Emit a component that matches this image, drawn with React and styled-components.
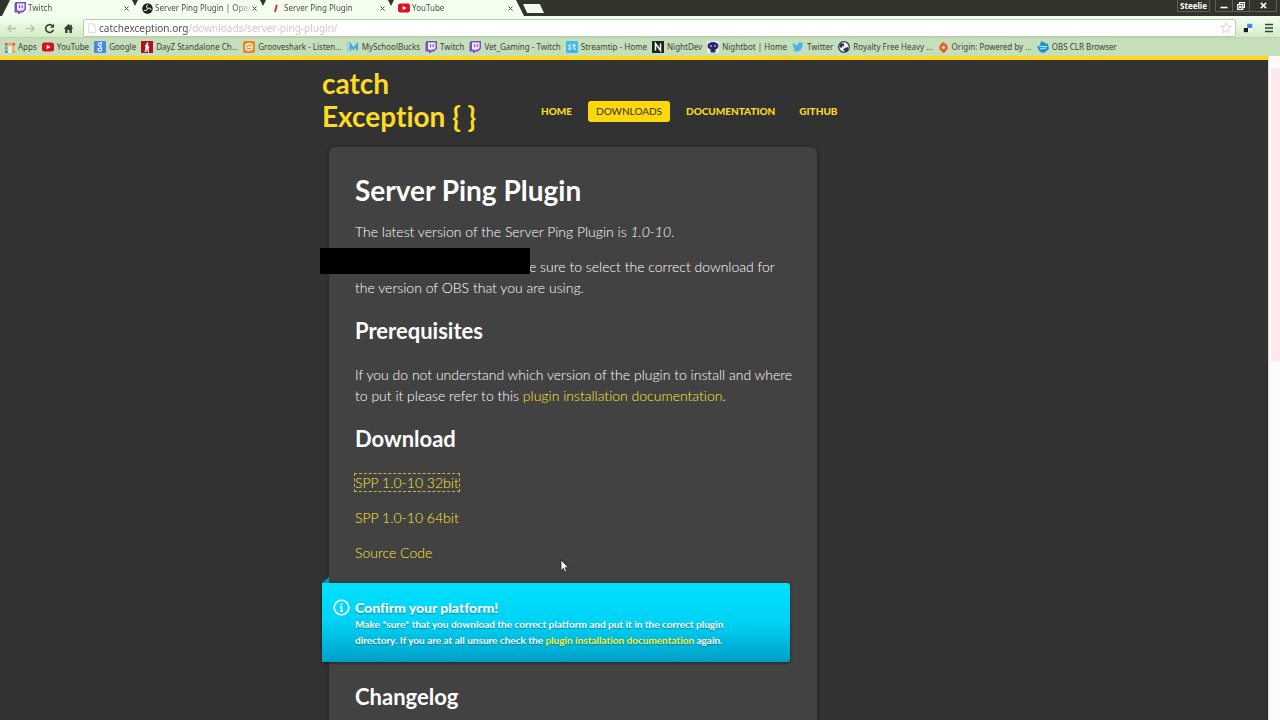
import React from "react";
import styled, { createGlobalStyle } from "styled-components";

const Global = createGlobalStyle`
  * { box-sizing: border-box; }
  html, body { margin: 0; padding: 0; background: #323232; overflow: hidden; }
  button { border: 0; padding: 0; background: none; font: inherit; color: inherit; }
  a { color: inherit; text-decoration: none; }
  h1, h2, h3, p { margin: 0; }
`;

const ui = `"Noto Sans", "Open Sans", sans-serif`;

const Shell = styled.div`
  display: flex;
  flex-direction: column;
  height: 100vh;
  font-family: ${ui};
`;

const TabStrip = styled.header`
  display: flex;
  height: 16px;
  padding-left: 2px;
  background: #31342b;
`;

const Tab = styled.div`
  display: flex;
  align-items: center;
  flex: 0 0 138px;
  min-width: 0;
  height: 16px;
  padding: 0 11px 0 12px;
  background: #f4fff0;
  clip-path: polygon(8px 0, 130px 0, 100% 100%, 0 100%);
  color: #4a5046;
  font-size: 8px;
  line-height: 16px;
  & + & { margin-left: -10px; }
`;

const TabTitle = styled.span`
  flex: 1;
  min-width: 0;
  margin-left: 2px;
  overflow: hidden;
  white-space: nowrap;
  mask-image: linear-gradient(to right, #000 78px, transparent 100px);
`;

const TabClose = styled.button`
  display: flex;
  margin-left: 2px;
`;

const NewTab = styled.button`
  width: 21px;
  height: 9px;
  margin: 4px 0 0 -1px;
  background: #f1faec;
  clip-path: polygon(0 0, 80% 0, 100% 100%, 20% 100%);
`;

const WindowBar = styled.div`
  display: flex;
  gap: 5px;
  height: 12px;
  margin: 0 3px 0 auto;
  color: #fff;
`;

const UserButton = styled.button`
  width: 33px;
  border: 1px solid #5c6056;
  border-top: 0;
  font-size: 8px;
  font-weight: 700;
  line-height: 11px;
`;

const WindowButtons = styled.div`
  display: flex;
  border: 1px solid #5c6056;
  border-top: 0;
`;

const WindowButton = styled.button`
  display: flex;
  align-items: center;
  justify-content: center;
  width: ${(p) => p.$w}px;
  & + & { border-left: 1px solid #5c6056; }
`;

const Toolbar = styled.div`
  display: flex;
  align-items: center;
  height: 21px;
  padding: 3px 1px 0 2px;
  background: linear-gradient(#f4fff0, #d3ecc9);
`;

const ToolButton = styled.button`
  display: flex;
  align-items: center;
  justify-content: center;
  width: ${(p) => p.$w || 19}px;
  height: 18px;
`;

const Omnibox = styled.div`
  display: flex;
  align-items: center;
  flex: 1;
  height: 18px;
  margin: 0 1px 0 5px;
  padding: 0 3px;
  background: #fff;
  border: 1px solid #b4cfa9;
  border-radius: 2px;
`;

const Address = styled.input`
  flex: 1;
  min-width: 0;
  height: 16px;
  margin-left: 2px;
  padding: 0;
  border: 0;
  outline: 0;
  font-family: ${ui};
  font-size: 10px;
  color: transparent;
  background: linear-gradient(to right, #4b4b4b 89px, #cdc3cd 89px);
  background-clip: text;
`;

const Bookmarks = styled.nav`
  display: flex;
  align-items: center;
  gap: 5px;
  height: 19px;
  padding-left: 4px;
  background: #c6dfbb;
  border-top: 1px solid #b9d3ae;
`;

const Bookmark = styled.a`
  display: flex;
  align-items: center;
  gap: 3px;
  flex: none;
  color: #38423a;
  font-size: 8px;
  line-height: 16px;
  white-space: nowrap;
`;

const Frame = styled.div`
  display: flex;
  flex: 1;
  min-height: 0;
`;

const Page = styled.div`
  flex: 1;
  min-width: 0;
  overflow: hidden;
  background: #323232;
  border-top: 4px solid #fbd51b;
  font-family: Lato, sans-serif;
  font-variant-ligatures: none;
`;

const Rail = styled.div`
  width: 12px;
  padding: 12px 0 0 2px;
  background: #fffafb;
  border-left: 1px solid #dcdcdc;
`;

const Thumb = styled.div`
  height: 45%;
  background: #fde8ec;
`;

const Container = styled.div`
  max-width: 640px;
  margin: 0 auto;
  padding: 7px 8px 0;
`;

const SiteHeader = styled.div`
  display: flex;
  align-items: flex-start;
`;

const Logo = styled.a`
  width: 211px;
  color: #fddb23;
  font-size: 28px;
  font-weight: 700;
  line-height: 33px;
`;

const Menu = styled.nav`
  display: flex;
  gap: 8px;
  margin-top: 34px;
`;

const MenuLink = styled.a`
  padding: 0 8px;
  border-radius: 3px;
  color: ${(p) => (p.$active ? "#32300f" : "#fddb23")};
  background: ${(p) => (p.$active ? "#fed80c" : "none")};
  font-size: 10px;
  font-weight: ${(p) => (p.$active ? 400 : 900)};
  line-height: 21px;
`;

const Card = styled.main`
  max-width: 488px;
  margin: 14px 0 0 7px;
  padding: 26px 23px 80px 26px;
  border-radius: 6px;
  background: #424242;
  box-shadow: 0 0 4px rgba(0, 0, 0, 0.35);
  color: #ffffff;
  font-size: 14px;
  font-weight: 300;
  line-height: 21px;
`;

const Title = styled.h1`
  color: #fff;
  font-size: 28px;
  font-weight: 700;
  line-height: 34px;
`;

const Heading = styled.h2`
  margin-top: 20px;
  color: #fff;
  font-size: 22px;
  font-weight: 700;
  line-height: 26px;
`;

const Para = styled.p`
  margin-top: ${(p) => p.$gap || 14}px;
`;

const RedactedPara = styled(Para)`
  position: relative;
  text-indent: 174px;
`;

const Redaction = styled.span`
  position: absolute;
  top: -8px;
  left: -35px;
  width: 210px;
  height: 26px;
  background: #000;
`;

const TextLink = styled.a`
  color: #ffe636;
`;

const DownloadLink = styled(TextLink)`
  outline: ${(p) => (p.$focused ? "1px dashed #c9b54a" : "none")};
`;

const Callout = styled.aside`
  position: relative;
  display: flex;
  gap: 5px;
  margin: 20px 4px 22px -33px;
  padding: 16px 40px 14px 11px;
  border-radius: 0 3px 3px 0;
  background: linear-gradient(#00e1ff, #00d2f6 50%, #009fc6);
  box-shadow: 0 1px 3px rgba(0, 0, 0, 0.5);
  color: #fff;
  font-size: 10px;
  font-weight: 700;
  line-height: 16px;
  text-shadow: 0 1px 1px rgba(0, 60, 80, 0.5);
  &::before {
    content: "";
    position: absolute;
    left: 0;
    top: -6px;
    border-left: 7px solid transparent;
    border-bottom: 6px solid #0093b5;
  }
`;

const CalloutTitle = styled.h3`
  font-size: 14px;
  font-weight: 900;
  line-height: 17px;
`;

const CalloutLink = styled.a`
  color: #fff23a;
`;

const Pointer = styled.svg`
  position: fixed;
  left: 560px;
  top: 559px;
`;

const Drawing = styled.svg`
  flex: none;
`;

const Svg = ({ s = 12, vb = 12, children }) => (
  <Drawing width={s} height={s} viewBox={`0 0 ${vb} ${vb}`} fill="none" aria-hidden="true">{children}</Drawing>
);

const icons = {
  apps: <Svg s={11}>{["#e2574c", "#f0a04b", "#e2574c", "#5bb56a", "#fff", "#e6c23f", "#4a90d9", "#fff", "#f0a04b"].map((c, i) => (
    <rect key={i} x={1 + (i % 3) * 4} y={1 + Math.floor(i / 3) * 4} width="3" height="3" fill={c} />))}</Svg>,
  youtube: <Svg><rect y="1.5" width="12" height="9" rx="2.2" fill="#dc1020" /><path d="M4.7 3.8v4.4L8.5 6z" fill="#fff" /></Svg>,
  google: <Svg><rect width="12" height="12" rx="1" fill="#4c86ea" /><path d="M8 1.8H6C3.6 1.8 3.5 5 5.8 5c1.900 0 2-3 .2-3.200M6 5c-.6 1 .9 1.200 1.400 2.100C8.300 9 7 10.300 5.500 10.300S3.200 8.400 4.600 7.600c.8-.4 1.400-.4 2-.4" stroke="#fff" strokeWidth="1.100" /></Svg>,
  dayz: <Svg><rect width="12" height="12" fill="#b01020" /><path d="M6 1l1.400 1-.4 2 1.500 3-1 .5.5 4H6.800L6.300 8 5 11H3.500l1-4L4 4.500 5.400 3z" fill="#fff" /></Svg>,
  groove: <Svg><rect width="12" height="12" rx="2" fill="#f58220" /><circle cx="6" cy="6" r="4" fill="#fff" /><path d="M3.500 6.500C4 4 7 3.500 8.500 5.500M4 7.500h4.500" stroke="#f58220" strokeWidth="1.300" /></Svg>,
  msb: <Svg><path d="M1 1v10" stroke="#7fc3ee" /><path d="M3.500 9.500v-6L6.500 8l3.500-4.500v6" stroke="#3f9fe0" strokeWidth="1.800" /></Svg>,
  twitch: <Svg><path d="M1.500 0H12v7.500L9 10.500H7L5.300 12H4v-1.500H.5V2z" fill="#7b4fc4" /><path d="M3 1.500h7.500v5.300L9 8.500H6.800L5.300 9.800V8.500H3z" fill="#f4efff" /><path d="M5.500 3.200v3M8.200 3.200v3" stroke="#7b4fc4" strokeWidth="1.200" /></Svg>,
  streamtip: <Svg><rect width="12" height="12" rx="1" fill="#41b8ee" /><path d="M5.500 3.800H3.800c-1.500 0-1.300 2 0 2.100s1.500 2.200 0 2.200H2M8 2.500v4.700c0 .9.800 1 2 .8M6.700 4.500H10" stroke="#e4f7ff" strokeWidth="1.100" /></Svg>,
  nightdev: <Svg><rect width="12" height="12" fill="#20221d" /><path d="M3.500 9.500v-7l5 7v-7" stroke="#fff" strokeWidth="1.500" /></Svg>,
  nightbot: <Svg><rect width="12" height="12" fill="#e9ecf4" /><ellipse cx="6" cy="5" rx="5.500" ry="4" fill="#2c2565" /><rect x="3.500" y="8" width="5" height="3.500" rx="1" fill="#2c2565" /><circle cx="4" cy="5" r="1" fill="#aab0e8" /><circle cx="8" cy="5" r="1" fill="#aab0e8" /></Svg>,
  twitter: <Svg><path d="M11.500 2.800l-1.100 1.100C10.400 8 7.500 10.500 4 10.500c-1.300 0-2.500-.3-3.500-1 1.300.1 2.400-.2 3.200-.9-1-.1-1.800-.7-2.100-1.600h1C1.500 6.600.8 5.700.8 4.600l1 .3C.8 4.100.6 2.900 1.200 1.800c1.200 1.400 2.800 2.300 4.800 2.400C5.600 2.400 6.700 1.300 8 1.300c.7 0 1.200.3 1.600.7l1.400-.5-.9 1.300z" fill="#4db3ee" /></Svg>,
  royalty: <Svg><circle cx="6" cy="6" r="5.300" fill="#eef1f7" stroke="#2b3158" strokeWidth="1.200" /><path d="M2 2.500h4v2.800H4V7L1.500 6zM7 7l3-1v3L7.500 10.500 5 9z" fill="#2b3158" /></Svg>,
  origin: <Svg s={11}><circle cx="6" cy="6" r="3.300" stroke="#f0562c" strokeWidth="2.800" /><path d="M7 0L4 2.500M5 12l3-2.500" stroke="#f0562c" strokeWidth="1.500" /></Svg>,
  clr: <Svg><path d="M4 0l7 3 1 5-5 4-4-1-3-5 3-2z" fill="#2194cf" /><path d="M2 5.500h8M3 8l6-1" stroke="#bfe7fb" strokeWidth="1.200" /></Svg>,
  obs: <Svg s={11}><circle cx="6" cy="6" r="5.700" fill="#1c1d19" /><path d="M6.500 1.800C4.500 3 4.500 5 6.300 5.700M9.800 8c0-2.200-1.900-3.200-3.400-2M2 7.800c2 1.200 3.900 0 3.800-1.800" stroke="#e6ebe0" strokeWidth="1.100" /></Svg>,
  slash: <Svg><path d="M6.800 2.800L5 10" stroke="#e02030" strokeWidth="1.800" /></Svg>,
};

const tabs = [
  ["twitch", "Twitch"],
  ["obs", "Server Ping Plugin | Open"],
  ["slash", "Server Ping Plugin"],
  ["youtube", "YouTube"],
];

const marks = [
  ["apps", "Apps"], ["youtube", "YouTube"], ["google", "Google"], ["dayz", "DayZ Standalone Ch..."],
  ["groove", "Grooveshark - Listen..."], ["msb", "MySchoolBucks"], ["twitch", "Twitch"],
  ["twitch", "Vet_Gaming - Twitch"], ["streamtip", "Streamtip - Home"], ["nightdev", "NightDev"],
  ["nightbot", "Nightbot | Home"], ["twitter", "Twitter"], ["royalty", "Royalty Free Heavy ..."],
  ["origin", "Origin: Powered by ..."], ["clr", "OBS CLR Browser"],
];

export default function App() {
  return (
    <Shell>
      <Global />
      <TabStrip>
        {tabs.map(([icon, title]) => (
          <Tab key={title}>
            {icons[icon]}
            <TabTitle>{title}</TabTitle>
            <TabClose aria-label={`Close ${title}`}>
              <Svg s={5} vb={5}><path d="M.5.5l4 4M4.500.5l-4 4" stroke="#4a5046" /></Svg>
            </TabClose>
          </Tab>
        ))}
        <NewTab aria-label="New tab" />
        <WindowBar>
          <UserButton>Steelie</UserButton>
          <WindowButtons>
            <WindowButton $w={16} aria-label="Minimize"><Svg s={8} vb={8}><path d="M.5 5.500h7" stroke="#fff" strokeWidth="1.600" /></Svg></WindowButton>
            <WindowButton $w={17} aria-label="Restore"><Svg s={8} vb={8}><path d="M2.500 2V.700h5v4.600H6M.7 2.700h5v4.600h-5zM2.500 4.500h1.500v1H2.500z" stroke="#fff" strokeWidth="1.200" /></Svg></WindowButton>
            <WindowButton $w={27} aria-label="Close"><Svg s={7} vb={8}><path d="M1 1l6 6M7 1L1 7" stroke="#fff" strokeWidth="1.800" /></Svg></WindowButton>
          </WindowButtons>
        </WindowBar>
      </TabStrip>
      <Toolbar>
        <ToolButton aria-label="Back"><Svg s={11}><path d="M11 6H2M5.500 2.500L2 6l3.500 3.500" stroke="#b3c2ac" strokeWidth="1.500" /></Svg></ToolButton>
        <ToolButton aria-label="Forward"><Svg s={11}><path d="M1 6h9M6.500 2.500L10 6 6.500 9.500" stroke="#b3c2ac" strokeWidth="1.500" /></Svg></ToolButton>
        <ToolButton aria-label="Reload"><Svg s={11}><path d="M9.500 3.300A4.300 4.300 0 1 0 10.200 7.500" stroke="#3a4036" strokeWidth="1.800" /><path d="M11 .8v4.400H6.600z" fill="#3a4036" /></Svg></ToolButton>
        <ToolButton aria-label="Home"><Svg s={11}><path d="M6 1L.8 6.300h1.500V11h2.700V7.500h2V11h2.700V6.300h1.500L9.700 4.700V1.800H8.300v1.500z" fill="#3a4036" /></Svg></ToolButton>
        <Omnibox>
          <Svg s={10}><path d="M2 .8h5.500L10 3.300v8H2zM7.300.8v2.700H10" stroke="#ddd0d8" /></Svg>
          <Address aria-label="Address" defaultValue="catchexception.org/downloads/server-ping-plugin/" />
          <Svg><path d="M6 .8l1.500 3.500 3.800.3-2.900 2.500.9 3.700L6 8.800l-3.300 2 .9-3.700L.7 4.600l3.800-.3z" stroke="#dccfe0" /></Svg>
        </Omnibox>
        <ToolButton $w={22} aria-label="Extension"><Svg s={10}><rect x="5" y="1" width="6" height="5" fill="#3f86ee" /><rect x="1" y="6" width="5" height="5" fill="#15181a" /><path d="M6 6h5v4H6z" fill="#fff" /></Svg></ToolButton>
        <ToolButton $w={20} aria-label="Menu"><Svg s={10} vb={10}><path d="M1 1.500h8M1 5h8M1 8.500h8" stroke="#3a4036" strokeWidth="1.700" /></Svg></ToolButton>
      </Toolbar>
      <Bookmarks aria-label="Bookmarks">
        {marks.map(([icon, label]) => (
          <Bookmark key={label} href="#">{icons[icon]}{label}</Bookmark>
        ))}
      </Bookmarks>
      <Frame>
        <Page>
          <Container>
            <SiteHeader>
              <Logo href="#">catch<br />Exception {"{ }"}</Logo>
              <Menu aria-label="Site">
                <MenuLink href="#">HOME</MenuLink>
                <MenuLink href="#" $active>DOWNLOADS</MenuLink>
                <MenuLink href="#">DOCUMENTATION</MenuLink>
                <MenuLink href="#">GITHUB</MenuLink>
              </Menu>
            </SiteHeader>
            <Card>
              <Title>Server Ping Plugin</Title>
              <Para>The latest version of the Server Ping Plugin is <em>1.0-10</em>.</Para>
              <RedactedPara>
                e sure to select the correct download for the version of OBS that you are using.
                <Redaction />
              </RedactedPara>
              <Heading>Prerequisites</Heading>
              <Para $gap={20}>
                If you do not understand which version of the plugin to install and where to put it please refer to
                this <TextLink href="#">plugin installation documentation</TextLink>.
              </Para>
              <Heading>Download</Heading>
              <Para $gap={20}><DownloadLink href="#" $focused>SPP 1.0-10 32bit</DownloadLink></Para>
              <Para><DownloadLink href="#">SPP 1.0-10 64bit</DownloadLink></Para>
              <Para><DownloadLink href="#">Source Code</DownloadLink></Para>
              <Callout>
                <Svg s={17} vb={17}><circle cx="8.500" cy="8.500" r="7.300" stroke="#fff" strokeWidth="1.600" /><path d="M8.500 7.500v5M8.500 4.300v1.900M7 7.800h1.500M7 12.200h3" stroke="#fff" strokeWidth="1.600" /></Svg>
                <div>
                  <CalloutTitle>Confirm your platform!</CalloutTitle>
                  <p>
                    Make *sure* that you download the correct platform and put it in the correct plugin directory. If
                    you are at all unsure check the <CalloutLink href="#">plugin installation documentation</CalloutLink> again.
                  </p>
                </div>
              </Callout>
              <Heading>Changelog</Heading>
            </Card>
          </Container>
        </Page>
        <Rail><Thumb /></Rail>
      </Frame>
      <Pointer width="9" height="14" viewBox="0 0 9 14" aria-hidden="true">
        <path d="M1 .8v10.700l2.400-2.200 1.600 3.700 1.700-.7-1.600-3.600h3.200z" fill="#fff" stroke="#222" strokeWidth=".8" />
      </Pointer>
    </Shell>
  );
}
